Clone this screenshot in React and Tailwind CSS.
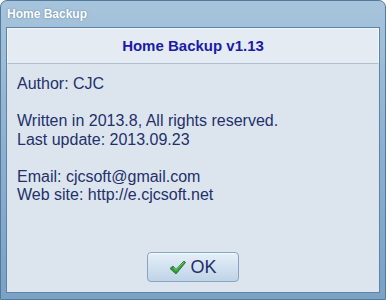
import React from 'react';

function CheckIcon() {
  return (
    <svg width="17" height="15" viewBox="0 0 17 15">
      <path
        d="M1 8.5 L4 6 L7 9.5 L15 1 L16.5 2.5 L7 14 Z"
        fill="#2e9a3a"
        stroke="#1f6f28"
        strokeWidth="0.8"
        strokeLinejoin="round"
      />
      <path d="M4.5 7.5 L7 10.5 L14.8 2.2" fill="none" stroke="#7fd37f" strokeWidth="0.8" />
    </svg>
  );
}

export default function App() {
  return (
    <div className="w-[386px] h-[300px] flex flex-col rounded-t-[7px] border border-[#55799b] bg-gradient-to-b from-[#a7c4dc] via-[#8cb0cf] to-[#7aa2c5] font-['Liberation_Sans',sans-serif]">
      {/* Title bar */}
      <div className="h-[26px] flex items-center px-[6px] shrink-0">
        <span className="text-[12px] font-bold text-white [text-shadow:0_0_2px_#5b7fa0]">Home Backup</span>
      </div>

      {/* Client area */}
      <div className="mx-[5px] h-[266px] border border-[#5d83a6] bg-[#dce5ee] flex flex-col">
        <div className="h-[36px] shrink-0 border border-[#f3f6f9] border-b-[#aebfd0] bg-[#e4ebf2] flex items-center justify-center">
          <span className="text-[15px] font-bold text-[#1b1ba6]">Home Backup v1.13</span>
        </div>

        <div className="flex-1 pl-[10px] pt-[11px] text-[16px] leading-[18.5px] text-[#23306b]">
          <div>Author: CJC</div>
          <div className="h-[18.5px]" />
          <div>Written in 2013.8, All rights reserved.</div>
          <div>Last update: 2013.09.23</div>
          <div className="h-[18.5px]" />
          <div>Email: cjcsoft@gmail.com</div>
          <div>Web site: http://e.cjcsoft.net</div>
        </div>

        <div className="flex justify-center pb-[10px]">
          <button className="w-[92px] h-[30px] rounded-[4px] border border-[#86a5c2] bg-gradient-to-b from-[#e6eff8] to-[#bfd4e7] flex items-center justify-center gap-[4px] shadow-[inset_0_1px_0_#f6fafd]">
            <CheckIcon />
            <span className="text-[18px] text-[#1f2d70]">OK</span>
          </button>
        </div>
      </div>
    </div>
  );
}
